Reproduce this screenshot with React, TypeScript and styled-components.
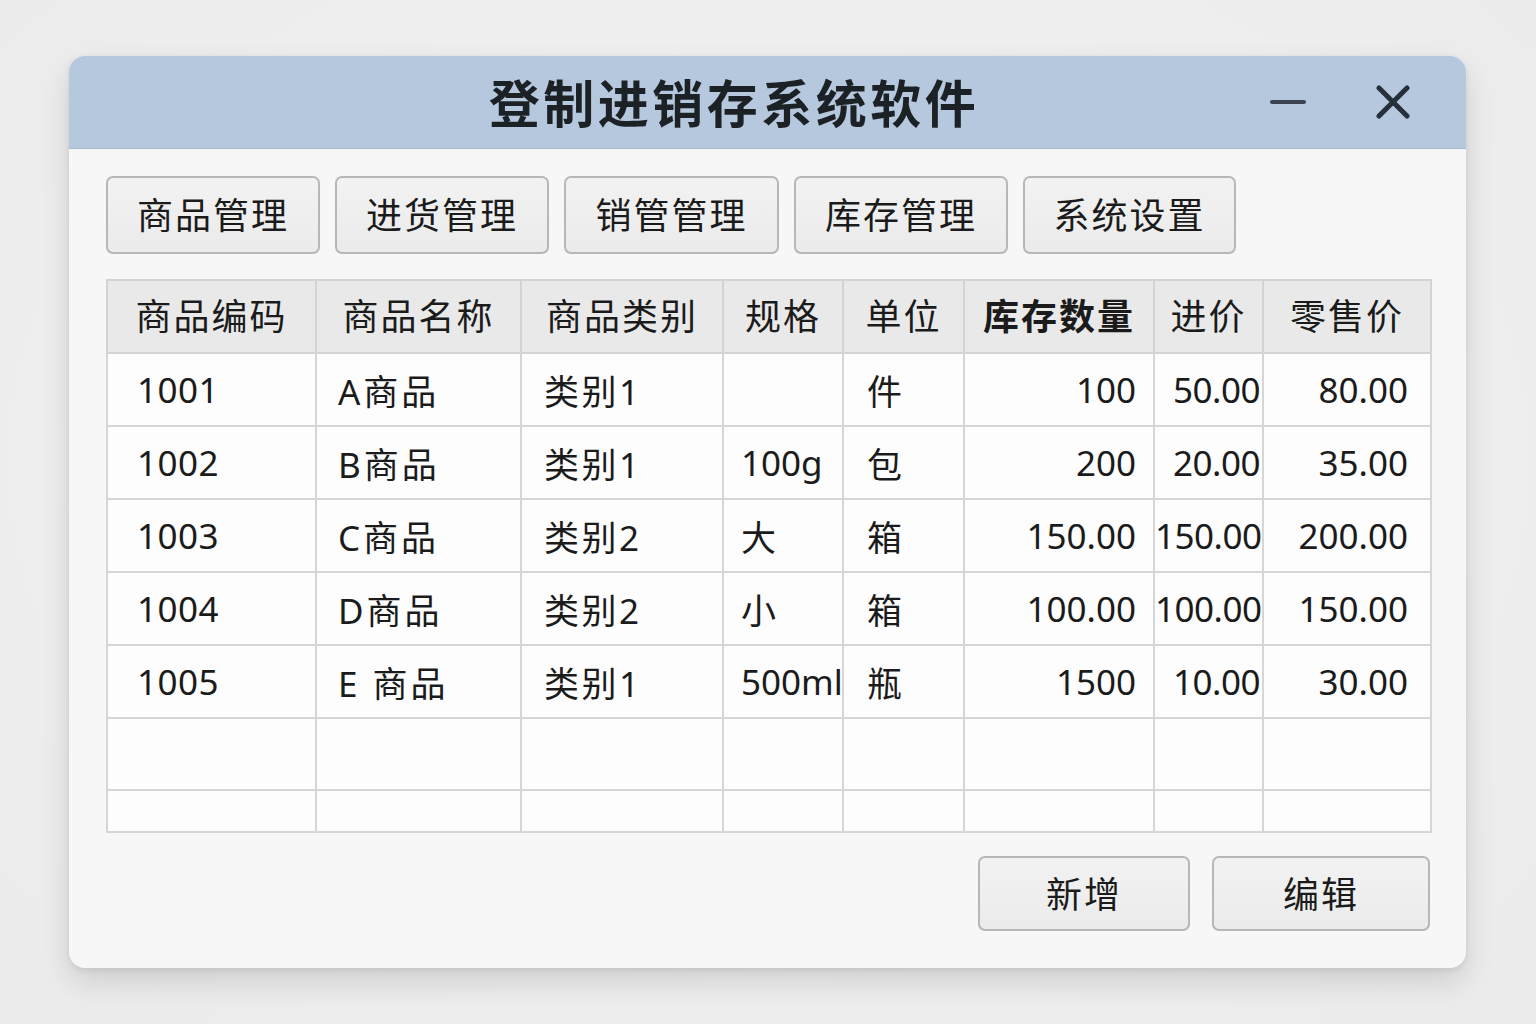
import React from "react";
import styled, { createGlobalStyle } from "styled-components";

const Global = createGlobalStyle`
  html, body { margin: 0; padding: 0; background: #ececec; }
  body { font-family: "Noto Sans", "Noto Sans CJK SC", sans-serif; color: #1b1b1b; }
`;

const Page = styled.div`
  width: 1536px;
  height: 1024px;
  padding: 56px 0 0 69px;
  box-sizing: border-box;
  background: radial-gradient(ellipse at 50% 45%, #f3f3f3 0%, #ebebeb 100%);
`;

const Window = styled.div`
  width: 1397px;
  height: 912px;
  border-radius: 16px;
  background: #f7f7f7;
  overflow: hidden;
  box-shadow: 0 14px 30px rgba(0, 0, 0, 0.13), 0 2px 6px rgba(0, 0, 0, 0.08);
  display: flex;
  flex-direction: column;
`;

const TitleBar = styled.div`
  height: 93px;
  flex: none;
  box-sizing: border-box;
  background: #b6c8dd;
  border-bottom: 1px solid #a9bace;
  display: flex;
  align-items: center;
  padding: 0 56px 0 129px;
`;

const Title = styled.div`
  flex: 1;
  text-align: center;
  font-family: "Noto Sans CJK SC", sans-serif;
  font-size: 51px;
  font-weight: 700;
  letter-spacing: 3.5px;
  color: #1c2126;
  line-height: 1;
  padding-bottom: 2px;
`;

const Controls = styled.div`
  display: flex;
  align-items: center;
  gap: 70px;
`;

const IconBox = styled.div`
  display: flex;
  align-items: center;
  justify-content: center;
`;

const Body = styled.div`
  flex: 1;
  display: flex;
  flex-direction: column;
  padding: 27px 36px 38px 37px;
`;

const Toolbar = styled.div`
  display: flex;
  gap: 15px;
`;

const Btn = styled.button<{ $w: number; $h: number }>`
  width: ${(p) => p.$w}px;
  height: ${(p) => p.$h}px;
  box-sizing: border-box;
  border: 2px solid #b7b7b7;
  border-radius: 7px;
  background: linear-gradient(#f2f2f2, #ebebeb);
  font-family: "Noto Sans CJK SC", sans-serif;
  font-size: 36px;
  letter-spacing: 2px;
  color: #1b1b1b;
  padding: 0 0 4px;
  cursor: pointer;
`;

const Table = styled.table`
  margin-top: 25px;
  width: 1324px;
  table-layout: fixed;
  border-collapse: collapse;
  border: 2px solid #cfcfcf;
  background: #fdfdfd;
`;

const HeadCell = styled.th<{ $bold?: boolean }>`
  height: 65px;
  padding: 0 0 6px;
  background: #e9e9e9;
  border: 2px solid #d3d3d3;
  font-family: "Noto Sans CJK SC", sans-serif;
  font-size: 36px;
  font-weight: ${(p) => (p.$bold ? 600 : 400)};
  letter-spacing: 2px;
  text-align: center;
  color: #1b1b1b;
`;

const Row = styled.tr<{ $h: number }>`
  height: ${(p) => p.$h}px;
`;

const Cell = styled.td<{ $align: string; $pl: number; $pr: number; $ls: number }>`
  padding: 0 ${(p) => p.$pr}px 0 ${(p) => p.$pl}px;
  border: 2px solid #d6d6d6;
  text-align: ${(p) => p.$align};
  font-family: "Noto Sans", "Noto Sans CJK SC", sans-serif;
  font-size: 35px;
  letter-spacing: ${(p) => p.$ls}px;
  color: #1b1b1b;
  white-space: nowrap;
  overflow: visible;
`;

const Footer = styled.div`
  margin-top: 23px;
  display: flex;
  justify-content: flex-end;
  gap: 22px;
`;

const cols = [
  { w: 209, label: "商品编码", align: "left", pl: 29, pr: 0, ls: 0.5 },
  { w: 205, label: "商品名称", align: "left", pl: 21, pr: 0, ls: 3 },
  { w: 202, label: "商品类别", align: "left", pl: 22, pr: 0, ls: 2.5 },
  { w: 120, label: "规格", align: "left", pl: 17, pr: 0, ls: 0 },
  { w: 121, label: "单位", align: "left", pl: 23, pr: 0, ls: 0 },
  { w: 190, label: "库存数量", align: "right", pl: 0, pr: 17, ls: 0, bold: true },
  { w: 109, label: "进价", align: "right", pl: 0, pr: 2, ls: -0.5 },
  { w: 168, label: "零售价", align: "right", pl: 0, pr: 22, ls: 0 },
];

const rows = [
  ["1001", "A商品", "类别1", "", "件", "100", "50.00", "80.00"],
  ["1002", "B商品", "类别1", "100g", "包", "200", "20.00", "35.00"],
  ["1003", "C商品", "类别2", "大", "箱", "150.00", "150.00", "200.00"],
  ["1004", "D商品", "类别2", "小", "箱", "100.00", "100.00", "150.00"],
  ["1005", "E 商品", "类别1", "500ml", "瓶", "1500", "10.00", "30.00"],
];

const tabs = [
  { label: "商品管理", w: 214 },
  { label: "进货管理", w: 214 },
  { label: "销管管理", w: 215 },
  { label: "库存管理", w: 214 },
  { label: "系统设置", w: 213 },
];

export default function App() {
  return (
    <Page>
      <Global />
      <Window>
        <TitleBar>
          <Title>登制进销存系统软件</Title>
          <Controls>
            <IconBox>
              <svg width="36" height="8" viewBox="0 0 36 8">
                <line x1="2" y1="4" x2="34" y2="4" stroke="#3b4550" strokeWidth="4" strokeLinecap="round" />
              </svg>
            </IconBox>
            <IconBox>
              <svg width="34" height="34" viewBox="0 0 34 34">
                <path d="M3 3 L31 31 M31 3 L3 31" stroke="#26303a" strokeWidth="5" strokeLinecap="round" />
              </svg>
            </IconBox>
          </Controls>
        </TitleBar>
        <Body>
          <Toolbar>
            {tabs.map((t) => (
              <Btn key={t.label} $w={t.w} $h={78}>
                {t.label}
              </Btn>
            ))}
          </Toolbar>
          <Table>
            <colgroup>
              {cols.map((c, i) => (
                <col key={i} style={{ width: c.w }} />
              ))}
            </colgroup>
            <thead>
              <tr>
                {cols.map((c) => (
                  <HeadCell key={c.label} $bold={c.bold}>
                    {c.label}
                  </HeadCell>
                ))}
              </tr>
            </thead>
            <tbody>
              {rows.map((r, ri) => (
                <Row key={ri} $h={73}>
                  {r.map((v, ci) => (
                    <Cell
                      key={ci}
                      $align={cols[ci].align}
                      $pl={cols[ci].pl}
                      $pr={cols[ci].pr}
                      $ls={cols[ci].ls}
                    >
                      {v}
                    </Cell>
                  ))}
                </Row>
              ))}
              <Row $h={72}>
                {cols.map((c, ci) => (
                  <Cell key={ci} $align="left" $pl={0} $pr={0} $ls={0} />
                ))}
              </Row>
              <Row $h={42}>
                {cols.map((c, ci) => (
                  <Cell key={ci} $align="left" $pl={0} $pr={0} $ls={0} />
                ))}
              </Row>
            </tbody>
          </Table>
          <Footer>
            <Btn $w={212} $h={75}>新增</Btn>
            <Btn $w={218} $h={75}>编辑</Btn>
          </Footer>
        </Body>
      </Window>
    </Page>
  );
}
